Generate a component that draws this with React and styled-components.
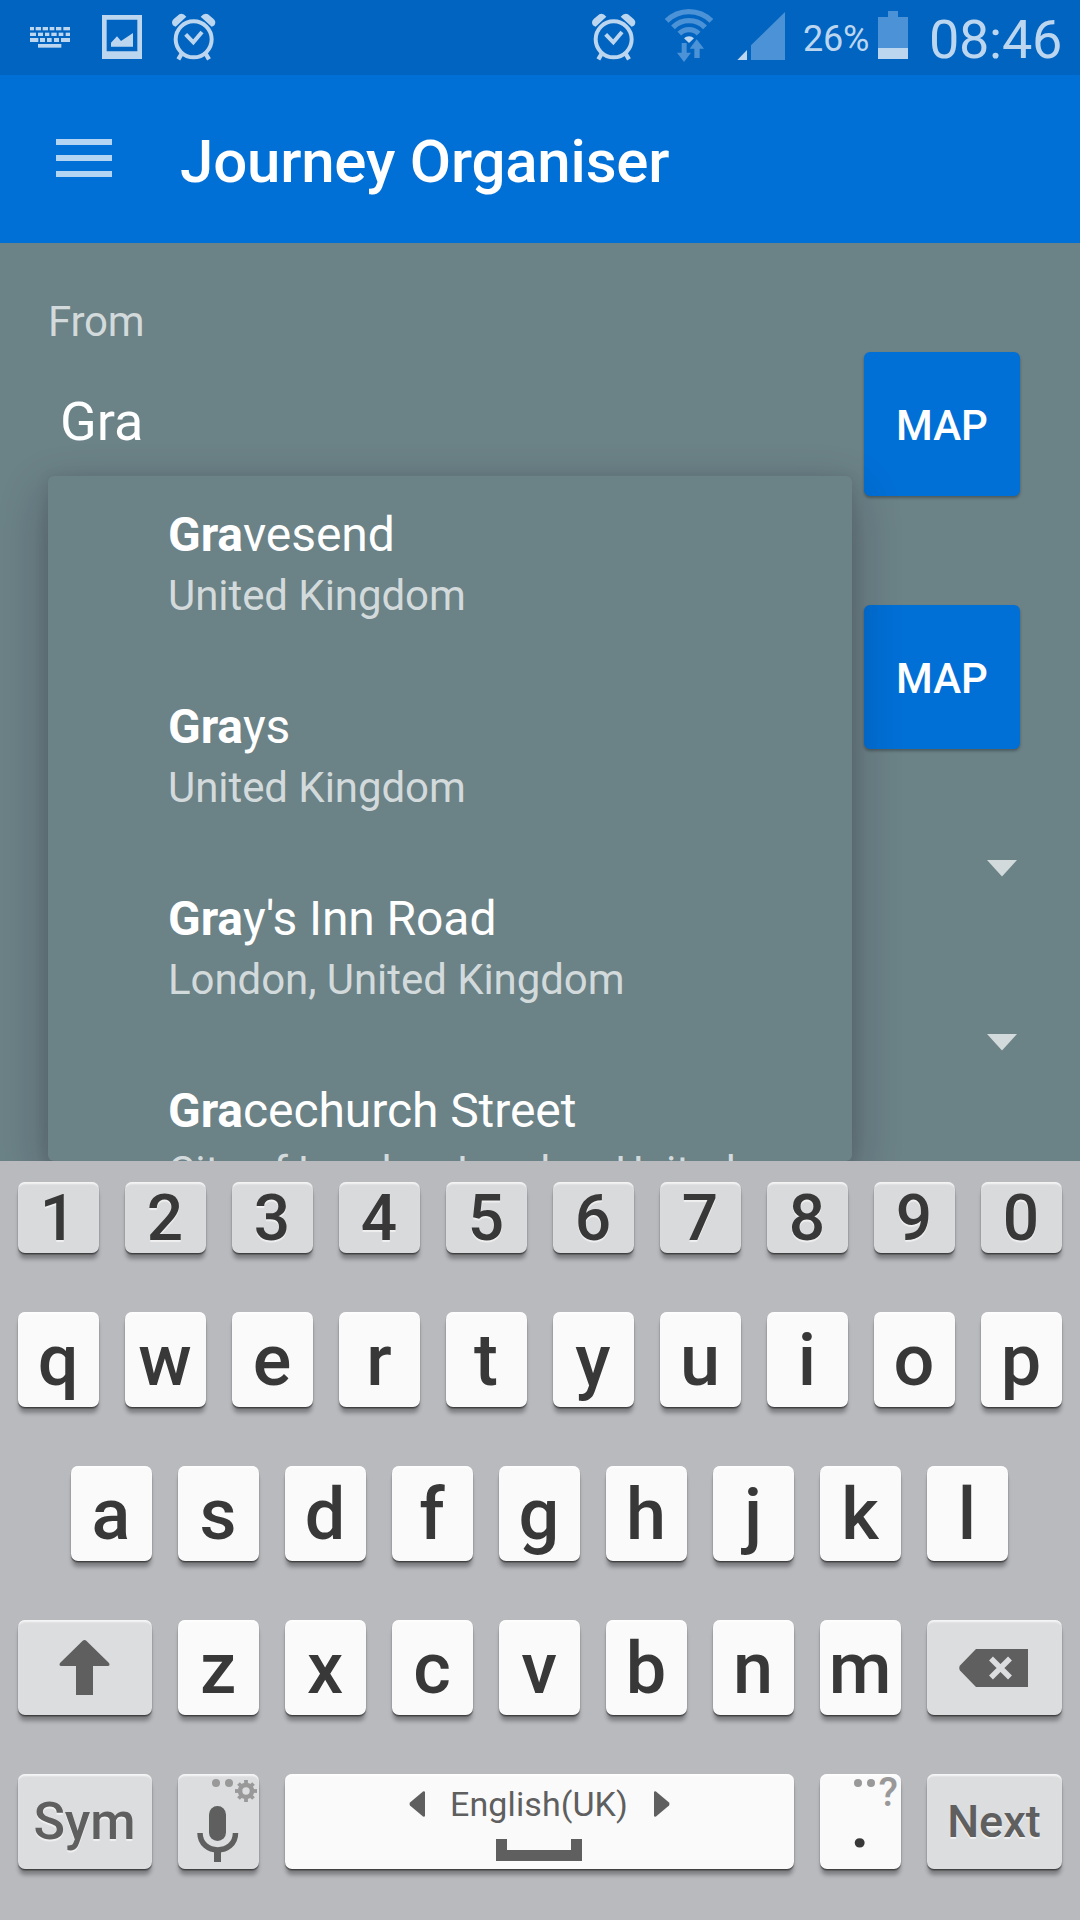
import React from 'react';
import styled, { createGlobalStyle, css } from 'styled-components';

const GlobalStyle = createGlobalStyle`
  *, *::before, *::after { box-sizing: border-box; }
  body {
    margin: 0;
    background: #6b8287;
    font-family: Roboto, "Noto Sans", sans-serif;
  }
`;

const Screen = styled.div`
  display: flex;
  flex-direction: column;
  width: 1080px;
  height: 1920px;
  overflow: hidden;
  background: #6b8287;
`;

/* ---------- status bar ---------- */

const StatusBar = styled.header`
  display: flex;
  justify-content: space-between;
  height: 75px;
  flex: none;
  padding: 0 21px 0 30px;
  background: #0064c0;
  color: #bcd6ef;
`;

const StatusGroup = styled.div`
  display: flex;
  align-items: flex-start;
`;

const StatusIcon = styled.svg`
  display: block;
  flex: none;
  width: ${(p) => p.$w}px;
  height: 75px;
  margin-left: ${(p) => p.$gap || 0}px;
  fill: #bcd6ef;
`;

const BatteryText = styled.span`
  width: 75px;
  margin-left: 18px;
  font-size: 36px;
  line-height: 79px;
  letter-spacing: -0.2px;
  white-space: nowrap;
`;

const Clock = styled.span`
  width: 130px;
  margin-left: 21px;
  font-size: 54px;
  font-weight: 400;
  line-height: 80px;
  letter-spacing: -0.3px;
  white-space: nowrap;
`;

/* ---------- app bar ---------- */

const AppBar = styled.div`
  display: flex;
  align-items: center;
  flex: none;
  height: 168px;
  padding: 0 56px;
  background: #006fd6;
`;

const MenuButton = styled.button`
  display: flex;
  flex-direction: column;
  gap: 10px;
  width: 56px;
  padding: 0;
  margin: 0 68px 2px 0;
  border: 0;
  background: none;
`;

const MenuLine = styled.span`
  height: 6px;
  background: #b3d4f3;
`;

const Title = styled.h1`
  margin: 0;
  padding-top: 5px;
  font-size: 60px;
  font-weight: 500;
  line-height: 70px;
  letter-spacing: -0.2px;
  color: #fff;
`;

/* ---------- form ---------- */

const Form = styled.main`
  position: relative;
  flex: none;
  height: 918px;
  padding: 54px 60px 0 48px;
  overflow: hidden;
`;

const Label = styled.div`
  height: 55px;
  font-size: 42px;
  line-height: 49px;
  letter-spacing: -0.2px;
  color: #d3dadb;
`;

const FieldRow = styled.div`
  display: flex;
  justify-content: space-between;
  height: 144px;
  margin-bottom: 109px;
`;

const FieldValue = styled.div`
  padding: 38px 0 0 12px;
  font-size: 54px;
  line-height: 63px;
  color: #fff;
`;

const MapButton = styled.button`
  width: 156px;
  height: 144px;
  margin: 0 0 0 auto;
  padding: 2px 0 0;
  border: 0;
  border-radius: 6px;
  background: #006fd6;
  box-shadow: 0 2px 3px rgba(0, 0, 0, 0.3);
  font-family: inherit;
  font-size: 42px;
  font-weight: 500;
  color: #fff;
`;

const SpinnerRow = styled.div`
  display: flex;
  justify-content: flex-end;
  height: 174px;
  padding: 2px 3px 0 0;
`;

const Caret = styled.svg`
  display: block;
  width: 30px;
  height: 17px;
  fill: #d3dadb;
`;

const Suggestions = styled.ul`
  position: absolute;
  top: 233px;
  left: 48px;
  width: 804px;
  height: 685px;
  margin: 0;
  padding: 0;
  overflow: hidden;
  list-style: none;
  border-radius: 6px;
  background: #6b8287;
  box-shadow: 0 18px 48px rgba(30, 16, 26, 0.3), 0 2px 14px rgba(30, 16, 26, 0.1);
`;

const Suggestion = styled.li`
  height: 192px;
  padding: 31px 84px 0 120px;
`;

const Place = styled.div`
  font-size: 48px;
  line-height: 56px;
  letter-spacing: -0.08px;
  color: #fff;
`;

const Match = styled.b`
  font-weight: 700;
`;

const Region = styled.div`
  margin-top: 8px;
  overflow: hidden;
  font-size: 42px;
  line-height: 49px;
  letter-spacing: -0.06px;
  white-space: nowrap;
  text-overflow: ellipsis;
  color: #d3dadb;
`;

/* ---------- keyboard ---------- */

const Keyboard = styled.section`
  display: flex;
  flex-direction: column;
  gap: 59px;
  flex: 1;
  padding: 21px 18px 51px;
  background: #b9babe;
`;

const KeyRow = styled.div`
  display: flex;
  gap: 26px;
  padding: 0 ${(p) => p.$indent || 0}px;
`;

const keyTones = {
  letter: css`
    background: #fafafa;
    color: #383838;
  `,
  digit: css`
    background: #d9dadc;
    color: #383838;
    text-shadow: 0 2px 1px rgba(255, 255, 255, 0.6);
  `,
  action: css`
    background: #dcdddf;
    color: #5f5f5f;
    text-shadow: 0 2px 1px rgba(255, 255, 255, 0.6);
  `,
};

const Key = styled.button`
  position: relative;
  display: flex;
  align-items: center;
  justify-content: center;
  flex: ${(p) => (p.$grow ? '1 1 0' : 'none')};
  width: ${(p) => p.$w || 81}px;
  height: ${(p) => p.$h || 95}px;
  margin: 0;
  padding: ${(p) => p.$drop || 0}px ${(p) => p.$trail ?? 1}px 0 0;
  border: 0;
  border-radius: 7px;
  font-family: inherit;
  font-size: ${(p) => p.$size || 72}px;
  font-weight: 500;
  line-height: 1;
  box-shadow: 0 1px 1px rgba(0, 0, 0, 0.4), 0 2px 1px rgba(0, 0, 0, 0.2),
    0 7px 4px -1px rgba(0, 0, 0, 0.32), inset 0 3px 2px -1px rgba(255, 255, 255, 0.75);
  ${(p) => keyTones[p.$tone || 'letter']}
`;

const KeyArt = styled.svg`
  display: block;
  flex: none;
  width: ${(p) => p.$w}px;
  height: ${(p) => p.$h}px;
  fill: #5f5f5f;
`;

const Hint = styled.span`
  position: absolute;
  top: 0;
  right: ${(p) => p.$right}px;
  display: flex;
  align-items: flex-start;
  gap: 5px;
  padding-top: 5px;
  font-size: 40px;
  line-height: 34px;
  text-shadow: none;
  color: #999;
`;

const HintDot = styled.i`
  width: 8px;
  height: 8px;
  border-radius: 50%;
  background: #999;
`;

const HintMark = styled.span`
  margin: -3px 0 0 -1px;
`;

const HintGear = styled.span`
  margin: 1px 0 0 -3px;
`;

const SpaceFace = styled.span`
  display: flex;
  flex-direction: column;
  align-items: center;
  gap: 16px;
  height: 95px;
  padding-top: 11px;
`;

const Language = styled.span`
  display: flex;
  align-items: center;
  justify-content: space-between;
  width: 261px;
  height: 38px;
  font-size: 34px;
  font-weight: 430;
  letter-spacing: 0.1px;
  color: #5f5f5f;
`;

const SpaceMark = styled.span`
  width: 86px;
  height: 22px;
  border: solid #5f5f5f;
  border-width: 0 11px 11px;
`;

function AlarmIcon({ gap }) {
  return (
    <StatusIcon $w={44} $gap={gap} viewBox="516 0 132 225">
      <circle cx="581" cy="118" r="54" fill="none" stroke="#bcd6ef" strokeWidth="12" />
      <path d="M557 103 580 127 606 96" fill="none" stroke="#bcd6ef" strokeWidth="12" />
      <path d="M516 66Q517 60 522 56L538 43Q549 38 559 50L527 80Q516 78 516 66Z" />
      <path d="M646 66Q645 60 640 56L624 43Q613 38 602 50L635 80Q646 78 646 66Z" />
      <path d="M548 156 535 178M614 156 627 178" stroke="#bcd6ef" strokeWidth="13" />
    </StatusIcon>
  );
}

const keyboardDots = [
  [81, 10, [[90, 102], [107, 123], [128, 144], [149, 163], [168, 184], [190, 210]]],
  [98, 10, [[90, 108], [114, 129], [135, 148], [154, 170], [176, 190], [197, 210]]],
  [114, 12, [[90, 115], [120, 135], [141, 155], [162, 177], [183, 210]]],
  [132, 11, [[114, 184]]],
];

function KeyboardIcon() {
  return (
    <StatusIcon $w={40} viewBox="90 0 120 225">
      {keyboardDots.map(([y, h, spans]) =>
        spans.map(([a, b]) => <rect key={`${y}-${a}`} x={a} y={y} width={b - a} height={h} />)
      )}
    </StatusIcon>
  );
}

function PictureIcon() {
  return (
    <StatusIcon $w={40} $gap={32} viewBox="306 0 120 225">
      <path fillRule="evenodd" d="M306 45H426V177H306ZM320 59V154H412V59Z" />
      <path d="M333 140V128L351 109 363 123 399 99V140Z" />
    </StatusIcon>
  );
}

function WifiIcon() {
  return (
    <StatusIcon $w={50} $gap={28} viewBox="312 0 150 225">
      <g fill="none" stroke="#4b92d6" strokeWidth="16">
        <path d="M319.800 62.800A95 95 0 0 1 454.200 62.800" />
        <path d="M338.900 81.900A68 68 0 0 1 435.100 81.900" />
        <path d="M358 101A41 41 0 0 1 416 101" />
      </g>
      <path d="M372 115A21 21 0 0 1 402 115L387 129Z" />
      <path
        fill="#4b92d6"
        d="M365 129H380V158H393L372 186 351 158H365ZM410 118 432 146H419V174H403V146H389Z"
      />
    </StatusIcon>
  );
}

function SignalIcon() {
  return (
    <StatusIcon $w={48} $gap={23} viewBox="531 0 144 225">
      <path d="M532 180 561 150V180Z" />
      <path fill="#4b92d6" d="M573 136 675 36V180H573Z" />
    </StatusIcon>
  );
}

function BatteryIcon() {
  return (
    <StatusIcon $w={30} viewBox="954 0 90 225">
      <path fill="#4b92d6" d="M954 51H984V33H1014V51H1044V144H954Z" />
      <rect x="954" y="144" width="90" height="33" />
    </StatusIcon>
  );
}

function GearIcon() {
  return (
    <KeyArt $w={22} $h={22} viewBox="-11 -11 22 22">
      <circle r="6" fill="none" stroke="#999" strokeWidth="4.600" />
      {[0, 45, 90, 135, 180, 225, 270, 315].map((a) => (
        <rect
          key={a}
          x="-1.900"
          y={a % 90 ? -10.6 : -11}
          width="3.800"
          height="4.500"
          fill="#999"
          transform={`rotate(${a})`}
        />
      ))}
    </KeyArt>
  );
}

const places = [
  ['Gra', 'vesend', 'United Kingdom'],
  ['Gra', 'ys', 'United Kingdom'],
  ['Gra', "y's Inn Road", 'London, United Kingdom'],
  ['Gra', 'cechurch Street', 'City of London, London, United Kingdom'],
];

export default function App() {
  return (
    <Screen>
      <GlobalStyle />
      <StatusBar>
        <StatusGroup>
          <KeyboardIcon />
          <PictureIcon />
          <AlarmIcon gap={30} />
        </StatusGroup>
        <StatusGroup>
          <AlarmIcon />
          <WifiIcon />
          <SignalIcon />
          <BatteryText>26%</BatteryText>
          <BatteryIcon />
          <Clock>08:46</Clock>
        </StatusGroup>
      </StatusBar>

      <AppBar>
        <MenuButton aria-label="Menu">
          <MenuLine />
          <MenuLine />
          <MenuLine />
        </MenuButton>
        <Title>Journey Organiser</Title>
      </AppBar>

      <Form>
        <Label>From</Label>
        <FieldRow>
          <FieldValue>Gra</FieldValue>
          <MapButton>MAP</MapButton>
        </FieldRow>
        <FieldRow>
          <MapButton>MAP</MapButton>
        </FieldRow>
        {[0, 1].map((i) => (
          <SpinnerRow key={i}>
            <Caret viewBox="0 0 30 17">
              <path d="M0 0H30L15 16.500Z" />
            </Caret>
          </SpinnerRow>
        ))}
        <Suggestions>
          {places.map(([match, rest, region]) => (
            <Suggestion key={rest}>
              <Place>
                <Match>{match}</Match>
                {rest}
              </Place>
              <Region>{region}</Region>
            </Suggestion>
          ))}
        </Suggestions>
      </Form>

      <Keyboard>
        <KeyRow>
          {[...'1234567890'].map((c) => (
            <Key key={c} $tone="digit" $h={71} $size={64} $drop={3}>
              {c}
            </Key>
          ))}
        </KeyRow>
        <KeyRow>
          {[...'qwertyuiop'].map((c) => (
            <Key key={c} $drop={2}>
              {c}
            </Key>
          ))}
        </KeyRow>
        <KeyRow $indent={53}>
          {[...'asdfghjkl'].map((c) => (
            <Key key={c} $drop={2}>
              {c}
            </Key>
          ))}
        </KeyRow>
        <KeyRow>
          <Key $tone="action" $w={134} $trail={2} aria-label="Shift">
            <KeyArt $w={51} $h={55} viewBox="0 0 51 55">
              <path d="M23.700.8Q25.500-.6 27.300.8L50 23Q51.500 26 48.500 26H34V55H17V26H2.500Q-.5 26 1 23Z" />
            </KeyArt>
          </Key>
          {[...'zxcvbnm'].map((c) => (
            <Key key={c} $drop={2}>
              {c}
            </Key>
          ))}
          <Key $tone="action" $grow $trail={2} aria-label="Delete">
            <KeyArt $w={70} $h={38} viewBox="0 0 70 38">
              <path d="M17 0H69V38H17L1 21.500Q-.5 19 1 16.500Z" />
              <path d="M32 9.500 51 28.500M51 9.500 32 28.500" stroke="#dcdddf" strokeWidth="5.500" />
            </KeyArt>
          </Key>
        </KeyRow>
        <KeyRow>
          <Key $tone="action" $w={134} $size={52}>
            Sym
          </Key>
          <Key $tone="action" $trail={0} aria-label="Voice input">
            <KeyArt $w={81} $h={95} viewBox="0 0 81 95">
              <rect x="31" y="32" width="17" height="35" rx="8.500" />
              <path
                d="M22 59C22 81.500 57.500 81.500 57.500 59"
                fill="none"
                stroke="#5f5f5f"
                strokeWidth="5.500"
              />
              <rect x="36" y="76" width="7" height="12" />
            </KeyArt>
            <Hint $right={2}>
              <HintDot />
              <HintDot />
              <HintGear>
                <GearIcon />
              </HintGear>
            </Hint>
          </Key>
          <Key $grow>
            <SpaceFace>
              <Language>
                <KeyArt $w={16} $h={26} viewBox="0 0 16 26">
                  <path d="M16 1V25Q15.500 26 14 25.500L1 14.500Q0 13 1 11.500L14 .5Q15.500 0 16 1Z" />
                </KeyArt>
                English(UK)
                <KeyArt $w={16} $h={26} viewBox="0 0 16 26">
                  <path d="M0 1V25Q.5 26 2 25.500L15 14.500Q16 13 15 11.500L2 .5Q.5 0 0 1Z" />
                </KeyArt>
              </Language>
              <SpaceMark />
            </SpaceFace>
          </Key>
          <Key $drop={2}>
            .
            <Hint $right={3}>
              <HintDot />
              <HintDot />
              <HintMark>?</HintMark>
            </Hint>
          </Key>
          <Key $tone="action" $w={135} $size={45}>
            Next
          </Key>
        </KeyRow>
      </Keyboard>
    </Screen>
  );
}
